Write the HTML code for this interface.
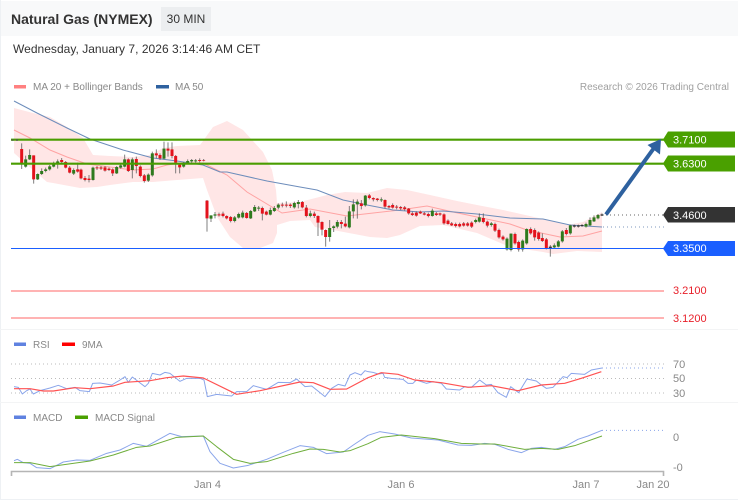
<!DOCTYPE html>
<html>
<head>
<meta charset="utf-8">
<style>
html,body{margin:0;padding:0;background:#fff}
body{width:738px;height:500px;overflow:hidden;position:relative;font-family:"Liberation Sans",sans-serif}
svg{position:absolute;left:0;top:0}
#head{position:absolute;left:1px;top:1px;width:737px;height:35px;background:#f8f9fa}
#title{position:absolute;left:11px;top:10px;font-size:14px;font-weight:bold;color:#333;line-height:18px;white-space:nowrap}
#chip{position:absolute;left:161px;top:7px;width:50px;height:24px;background:#eceef0;font-size:12px;color:#333;line-height:24px;text-align:center}
#date{position:absolute;left:13px;top:41px;font-size:12px;color:#333;line-height:16px;white-space:nowrap;letter-spacing:.025px}
</style>
</head>
<body>
<div id="head"></div>
<div id="title">Natural Gas (NYMEX)</div>
<div id="chip">30 MIN</div>
<div id="date">Wednesday, January 7, 2026 3:14:46 AM CET</div>
<svg width="738" height="500" viewBox="0 0 738 500" font-family="'Liberation Sans',sans-serif">
<rect x="0" y="0" width="1" height="500" fill="#eef1f4"/>
<rect x="0" y="329" width="738" height="1" fill="#f3f4f5"/>
<rect x="0" y="402" width="738" height="1" fill="#f3f4f5"/>
<rect x="0" y="499" width="738" height="1" fill="#eef1f4"/>

<!-- legends -->
<rect x="14" y="85" width="12" height="3.5" fill="#ff8080"/>
<text x="33" y="90" font-size="10" fill="#888">MA 20 + Bollinger Bands</text>
<rect x="156" y="85" width="13" height="3.5" fill="#2e619f"/>
<text x="175" y="90" font-size="10" fill="#888">MA 50</text>
<text x="729" y="90" font-size="10" fill="#a0a0a0" text-anchor="end">Research © 2026 Trading Central</text>

<!-- bollinger band -->
<path fill="#ffe6e6" d="M14 108L33 113L50 117L67 127L83 138L93 155L110 156L133 157L150 155L163 148L177 146L200 145L203 141L213 127L227 121L243 130L263 152L272 170L276 190L277 203L300 202L327 195L345 192L367 193L387 188L407 190L430 195L457 201L477 205L503 210L543 219L567 225L583 222L602 212L602 252L577 251L553 254L543 252L510 247L477 233L443 225L420 226L400 235L387 238L370 237L333 230L315 227L310 220L290 221L277 225L277 233L273 243L260 248L243 248L230 237L217 217L207 190L203 178L177 180L153 182L133 182L110 185L97 187L80 188L53 183L47 182L33 170L14 153Z"/>

<!-- MA20 -->
<polyline fill="none" stroke="#ffa3a3" stroke-width="1" points="14,130 30,138 50,150 67,157 87,164 133,170 153,169 167,165 180,163 200,163 203,163 227,175 247,192 282,213 310,209 347,216 400,210 420,207 427,206 453,212 477,217 510,224 527,230 560,237 583,236 602,231"/>
<!-- MA50 -->
<polyline fill="none" stroke="#6d8dbb" stroke-width="1" points="14,101 37,113 67,128 90,139 123,150 153,158 177,161 203,165 220,172 227,172 267,181 300,187 317,190 343,200 367,205 393,210 420,212 443,211 477,214 510,218 543,219 570,225 602,227"/>
<line x1="603" y1="227" x2="664" y2="227" stroke="#7d97bd" stroke-width="1" stroke-dasharray="1 3"/>
<line x1="606" y1="215" x2="664" y2="215" stroke="#666" stroke-width="1" stroke-dasharray="1 3"/>

<!-- candles part 1 -->
<g transform="translate(0 90) scale(.33333)" fill="none">
<path stroke="#555" stroke-width="3" opacity=".75" d="M65 160V237M77 197V233M89 178V210M101 196V281M113 250V270M125 235V255M137 233V247M149 225V242M161 215V232M173 208V236M185 204V220M197 213V235M209 228V250M221 235V255M233 218V248M243 236V268M255 258V274M267 255V277M279 230V272M291 228V240M303 228V240M315 228V245M327 232V243M338 235V258M350 228V252M362 220V236M374 194V232M385 205V246M397 203V265M409 200V250M421 226V262M433 252V278M445 250V276M457 185V260M469 178V205M480 190V210M492 155V208M504 157V200M516 157V205M527 195V250M539 220V250M551 216V233M563 208V222M575 207V218M587 207V218M599 205V217M611 207V214"/>
<path stroke="#e3121c" stroke-width="9" d="M65 177V220M101 196V268M185 210V216M197 216V233M209 233V248M233 238V245M243 239V265M255 264V270M267 266V270M291 232V235M303 232V236M315 232V242M327 236V240M338 238V250M385 208V243M409 207V228M421 230V258M433 256V273M469 190V196M480 195V205M504 176V182M516 178V198M527 198V218M539 224V232M599 210V213M611 210V212"/>
<path stroke="#2f7a1e" stroke-width="9" d="M77 208V230M89 195V208M113 252V268M125 243V252M137 238V243M149 229V238M161 222V230M173 214V220M221 240V251M279 233V270M350 231V250M362 226V233M374 208V230M397 208V240M445 254V272M457 190V256M492 176V206M551 222V230M563 213V218M575 210V214M587 211V214"/>
</g>
<!-- candles part 2 -->
<g transform="translate(200 110) scale(.33333)" fill="none">
<path stroke="#555" stroke-width="3" opacity=".75" d="M21 270V365M33 316V336M45 306V325M57 308V320M69 305V322M80 316V328M92 318V337M104 318V337M116 308V326M128 302V325M140 306V326M152 300V327M164 285V306M176 288V303M187 290V331M199 302V316M211 293V316M223 288V306M235 280V298M247 278V292M259 274V292M271 280V294M283 275V296M295 270V295M307 273V295M319 285V322M331 302V322M343 305V324M354 316V378M366 334V376M377 358V410M389 330V395M401 346V366M412 330V355M424 330V355M436 320V352M448 288V355M460 268V325M472 268V326M484 270V298M496 255V290M508 252V268M520 262V274M532 264V274M544 262V276M555 268V295M567 285V296M578 280V296M590 285V298M602 288V300M614 288V302M626 294V314"/>
<path stroke="#e3121c" stroke-width="9" d="M21 272V325M57 313V316M69 311V318M80 318V325M92 321V333M140 309V324M187 294V311M199 305V314M247 284V287M259 284V287M271 284V288M307 276V292M319 293V318M343 311V318M354 318V338M366 336V359M377 360V381M424 336V342M436 341V349M484 280V288M508 256V264M520 264V268M532 266V270M555 270V290M567 288V292M578 285V293M590 290V293M602 291V295M614 292V297M626 296V310"/>
<path stroke="#2f7a1e" stroke-width="9" d="M33 316V326M45 313V317M104 322V333M116 312V323M128 308V322M152 303V325M164 291V304M176 293V296M211 300V314M223 294V303M235 284V293M283 279V292M295 276V282M331 310V318M389 354V381M401 349V354M412 336V350M448 304V352M460 283V304M472 275V283M496 257V286M544 268V271"/>
</g>
<g transform="translate(410 130) scale(.33333)" fill="none">
<path stroke="#555" stroke-width="3" opacity=".75" d="M7 245V258M19 244V260M31 242V252M43 246V256M55 248V262M67 236V260M79 246V258M90 248V258M102 250V284M114 268V284M125 276V288M137 278V292M149 278V292M161 276V290M173 276V290M185 274V294M197 266V280M208 250V278M220 250V280M232 272V292M244 276V290M255 278V306M267 296V326M279 316V332M291 322V362M303 310V364M315 308V344M326 332V365M338 328V365M350 295V344M362 292V314M374 295V332M386 304V332M397 310V336M409 324V358M421 345V380M433 340V354M445 330V352M457 300V338M469 294V316M481 284V314M493 284V293M505 284V293M516 282V291M528 278V293M540 262V288M552 256V276M564 252V268M576 250V258"/>
<path stroke="#e3121c" stroke-width="9" d="M7 250V255M19 248V257M31 245V250M43 250V254M55 252V258M79 250V255M90 250V254M102 253V280M114 272V282M125 280V286M137 282V288M149 282V289M161 280V287M173 280V287M185 278V290M220 264V276M232 275V287M255 282V302M267 300V322M279 320V328M315 312V340M326 336V358M362 297V310M374 300V322M386 308V327M397 324V333M409 328V355M469 300V312"/>
<path stroke="#2f7a1e" stroke-width="9" d="M67 242V258M197 270V276M208 262V275M244 280V285M291 326V358M303 311V360M338 332V358M350 297V340M433 346V352M445 334V350M457 304V334M481 286V310M528 282V290M540 270V286M552 262V274M564 255V265"/>
<path stroke="#333" stroke-width="9" d="M421 350V354M493 286V290M505 286V290M516 285V288M576 253V257"/>
</g>

<!-- level lines -->
<line x1="11" y1="139.7" x2="664" y2="139.7" stroke="#4a9d00" stroke-width="2.2"/>
<line x1="11" y1="163.7" x2="664" y2="163.7" stroke="#4a9d00" stroke-width="2.2"/>
<path d="M12.5 139V141M17 139V141" stroke="#555" stroke-width="2" opacity=".6"/>
<line x1="11" y1="248.5" x2="664" y2="248.5" stroke="#1a5fff" stroke-width="1"/>
<line x1="11" y1="291" x2="664" y2="291" stroke="#ffb3b3" stroke-width="2"/>
<line x1="11" y1="318" x2="664" y2="318" stroke="#ffb3b3" stroke-width="2"/>

<!-- arrow -->
<line x1="606" y1="214.5" x2="654" y2="148" stroke="#2e619f" stroke-width="4"/>
<polygon points="661,139 647.5,145 660,154.5" fill="#2e619f"/>

<!-- price labels -->
<polygon points="663,139.5 668,131.5 735,131.5 735,147.5 668,147.5" fill="#4aa000"/>
<polygon points="663,163.5 668,155.5 735,155.5 735,171.5 668,171.5" fill="#4aa000"/>
<polygon points="663,215 668,207 735,207 735,222.5 668,222.5" fill="#333"/>
<polygon points="663,248.5 668,241 735,241 735,256 668,256" fill="#1a5fff"/>
<g font-size="11">
<text x="673" y="143.5" fill="#fff">3.7100</text>
<text x="673" y="167.5" fill="#fff">3.6300</text>
<text x="673" y="219" fill="#fff">3.4600</text>
<text x="673" y="252" fill="#fff">3.3500</text>
<text x="673" y="294" fill="#e8202a">3.2100</text>
<text x="673" y="322" fill="#e8202a">3.1200</text>
</g>

<!-- RSI -->
<rect x="14" y="342.5" width="12" height="3.5" fill="#5f82e0"/>
<text x="33" y="348" font-size="10" fill="#888">RSI</text>
<rect x="62" y="342.5" width="13" height="3.5" fill="#ff0000"/>
<text x="82" y="348" font-size="10" fill="#888">9MA</text>
<g stroke="#bbb" stroke-width="1" stroke-dasharray="1 3">
<line x1="11" y1="364" x2="664" y2="364"/>
<line x1="11" y1="378.5" x2="664" y2="378.5"/>
<line x1="11" y1="393" x2="664" y2="393"/>
</g>
<g font-size="11" fill="#888">
<text x="673" y="368">70</text>
<text x="673" y="382">50</text>
<text x="673" y="397">30</text>
<text x="673" y="441">0</text>
<text x="673" y="471">-0</text>
</g>
<g transform="translate(0 330) scale(.33333)" fill="none" stroke-linejoin="round">
<polyline stroke="#8aa5ea" stroke-width="3" points="42,170 55,172 67,192 80,182 90,177 100,192 120,182 150,174 175,166 200,176 225,172 240,182 268,185 278,160 300,159 335,165 360,150 375,140 385,157 397,141 415,155 435,170 445,160 457,130 480,135 495,127 510,130 540,154 560,145 600,145 612,150 622,200 650,193 695,198 710,185 740,185 760,167 800,178 835,157 870,158 890,147 915,170 935,168 975,200 995,175 1015,163 1035,168 1050,135 1065,128 1083,135 1095,122 1104,125 1119,127 1134,132 1149,130 1154,142 1174,145 1209,148 1224,160 1239,160 1249,150 1279,160 1299,155 1324,160 1339,177 1379,180 1394,170 1414,172 1439,150 1459,165 1474,163 1494,188 1519,202 1532,170 1556,188 1581,147 1609,153 1624,165 1639,175 1659,172 1689,140 1701,143 1714,130 1754,133 1774,120 1806,114"/>
<polyline stroke="#ff5252" stroke-width="3.5" points="42,176 90,176 130,183 160,183 225,173 270,176 340,168 375,157 450,152 500,143 550,138 610,144 710,193 780,182 900,156 940,158 990,178 1040,177 1104,143 1144,128 1194,133 1244,150 1324,158 1404,172 1474,167 1554,182 1624,165 1694,160 1744,145 1804,125"/>
<line x1="1806" y1="114" x2="1989" y2="114" stroke="#8aa5ea" stroke-width="3" stroke-dasharray="3 9"/>
</g>

<!-- MACD -->
<rect x="14" y="415.5" width="12" height="3.5" fill="#5f82e0"/>
<text x="33" y="421" font-size="10" fill="#888">MACD</text>
<rect x="75" y="415.5" width="13" height="3.5" fill="#4aa000"/>
<text x="95" y="421" font-size="10" fill="#888">MACD Signal</text>
<g transform="translate(0 330) scale(.33333)" fill="none" stroke-linejoin="round">
<polyline stroke="#8aa5ea" stroke-width="3" points="42,392 52,388 70,398 90,400 110,413 150,416 190,396 230,390 270,391 320,370 360,360 400,340 440,349 470,332 510,310 545,320 610,318 630,365 660,400 700,414 745,406 800,388 850,367 900,347 940,352 980,371 1030,366 1060,345 1104,316 1139,305 1184,312 1234,324 1314,330 1374,345 1414,346 1454,340 1484,343 1524,358 1564,368 1594,355 1624,352 1664,358 1694,350 1734,328 1764,318 1806,301"/>
<polyline stroke="#6fae3c" stroke-width="3" points="42,398 90,398 150,410 270,393 340,375 410,352 450,348 530,322 610,318 650,350 700,388 750,400 800,395 880,370 930,357 970,358 1020,366 1050,362 1104,341 1144,322 1204,315 1304,326 1384,340 1444,342 1484,342 1574,358 1624,355 1674,358 1724,347 1806,318"/>
<line x1="1806" y1="301" x2="1989" y2="301" stroke="#8aa5ea" stroke-width="3" stroke-dasharray="3 9"/>
</g>

<!-- x axis -->
<path d="M11.5 476V471.5H663.5V476" fill="none" stroke="#b5b5b5" stroke-width="1.6"/>
<g font-size="11" fill="#888" text-anchor="middle">
<text x="207.5" y="488">Jan 4</text>
<text x="401" y="488">Jan 6</text>
<text x="586" y="488">Jan 7</text>
<text x="653" y="488">Jan 20</text>
</g>
</svg>
</body>
</html>
